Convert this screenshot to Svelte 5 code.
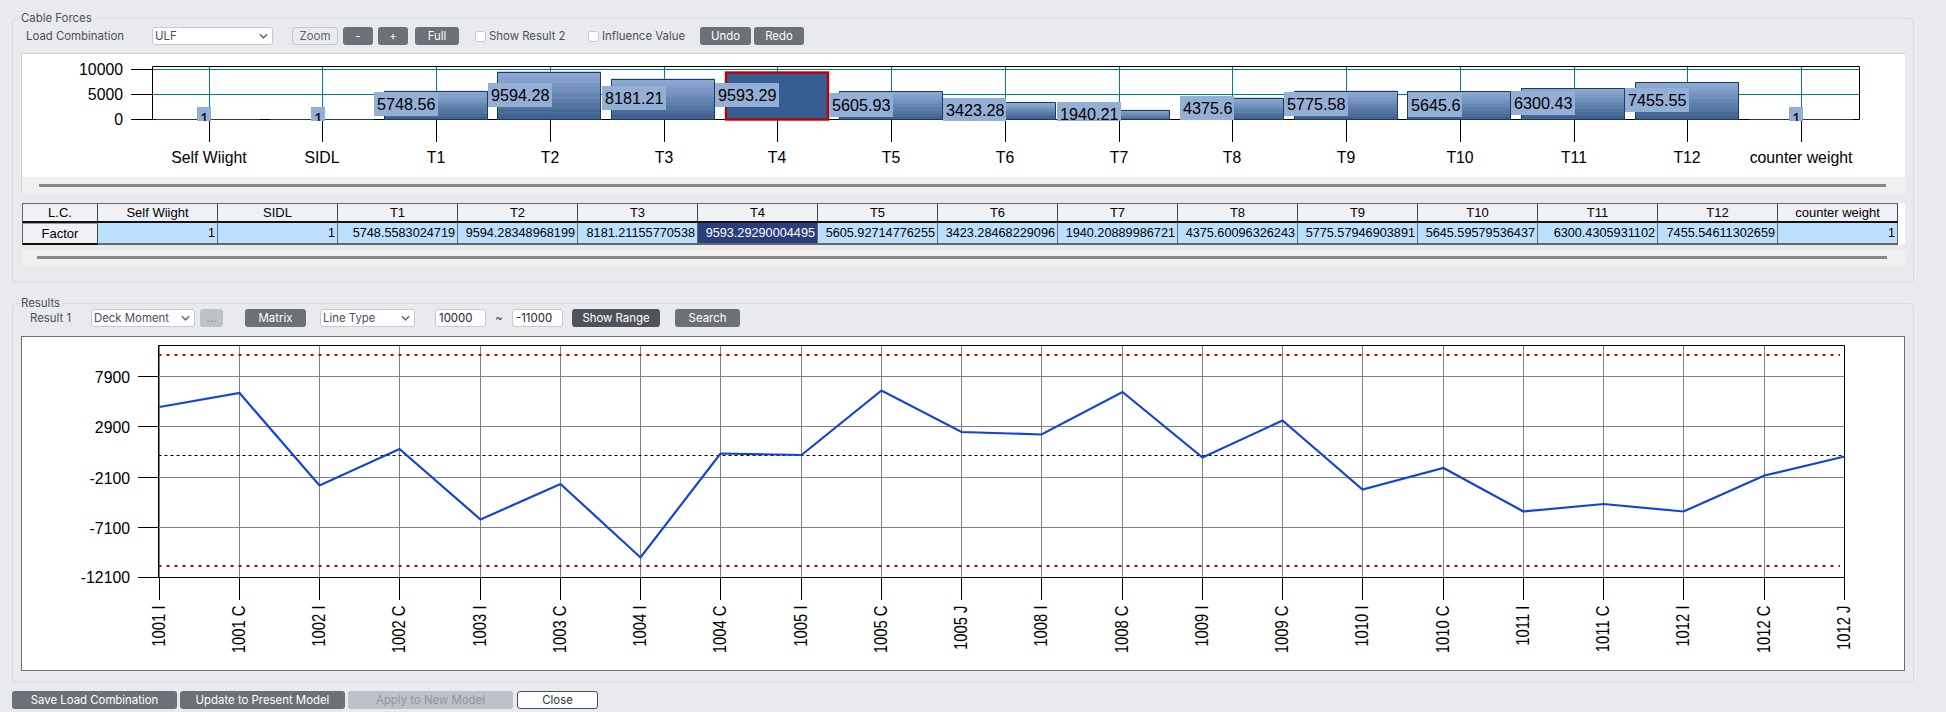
<script>
  const cats = ['Self Wiight','SIDL','T1','T2','T3','T4','T5','T6','T7','T8','T9','T10','T11','T12','counter weight'];
  const full = ['1','1','5748.5583024719','9594.28348968199','8181.21155770538','9593.29290004495','5605.92714776255','3423.28468229096','1940.20889986721','4375.60096326243','5775.57946903891','5645.59579536437','6300.4305931102','7455.54611302659','1'];
  const vals = [1,1,5748.56,9594.28,8181.21,9593.29,5605.93,3423.28,1940.21,4375.6,5775.58,5645.6,6300.43,7455.55,1];
  const labels = [
    ['1',197,211,107],['1',311,325,107],['5748.56',374,438,92],['9594.28',488,552,83],['8181.21',602,666,86],
    ['9593.29',715,779,83],['5605.93',829,893,93],['3423.28',943,1006,98],['1940.21',1057,1121,102],
    ['4375.6',1180,1234,96],['5775.58',1284,1348,92],['5645.6',1408,1462,93],['6300.43',1511,1575,91],
    ['7455.55',1625,1689,88],['1',1789,1803,107]
  ];
  const cx = (i) => Math.round(208.6 + 113.76 * i) + 0.5;
  const bands = Array.from({ length: 9 }, (_, i) => i);
  const bandColor = ['#8ba8d2','#84a1cb','#7b98c3','#7190bb','#6787b2','#5d7ea9','#5375a0','#496c97','#3f628e'];

  const pts = ['1001 I','1001 C','1002 I','1002 C','1003 I','1003 C','1004 I','1004 C','1005 I','1005 C','1005 J','1008 I','1008 C','1009 I','1009 C','1010 I','1010 C','1011 I','1011 C','1012 I','1012 C','1012 J'];
  const ys = [407,393,485.5,449,519.5,484,557.5,453.5,455,390.5,432,434.5,392,457.5,420.5,489.5,468,511.5,504,511.5,475.5,456.5];
  const px = (i) => Math.round(158.5 + 80.25 * i) + 0.5;
  const line = ys.map((y, i) => px(i) + ',' + y).join(' ');
  const yt = [['7900',376.5],['2900',426.5],['-2100',477.5],['-7100',527.5]];
</script>

<div class="page">
  <section class="group first">
    <span class="legend">Cable Forces</span>
    <div class="bar one">
      <span class="lbl wlc">Load Combination</span>
      <div class="sel wulf"><select><option>ULF</option></select><svg class="chev" viewBox="0 0 10 6"><path d="M1 1l4 4 4-4" /></svg></div>
      <button class="ghost wzoom">Zoom</button>
      <button class="btn wpm">-</button>
      <button class="btn wpm2">+</button>
      <button class="btn wfull">Full</button>
      <label class="chk c1"><input type="checkbox" />Show Result 2</label>
      <label class="chk c2"><input type="checkbox" />Influence Value</label>
      <button class="btn wundo">Undo</button>
      <button class="btn wredo">Redo</button>
    </div>

    <div class="panel">
      <svg class="top" viewBox="22 53 1883 123" width="1883" height="123">
        <defs><clipPath id="pc"><rect x="100" y="60" width="1770" height="61" /></clipPath></defs>
        <line x1="152.5" x2="1859.5" y1="69.5" y2="69.5" stroke="#008080" />
        <line x1="152.5" x2="1859.5" y1="94.5" y2="94.5" stroke="#008080" />
        {#each cats as c, i}
          <line x1={cx(i)} x2={cx(i)} y1="66" y2="119" stroke="#008080" />
          <line x1={cx(i)} x2={cx(i)} y1="119" y2="142" stroke="#000" />
          <text class="t16" x={cx(i) - 0.5} y="163" text-anchor="middle">{c}</text>
        {/each}
        <path d="M152.5 119.5V66.5H1859.5V119.5" fill="none" stroke="#000" />
        <line x1="131" x2="1859.5" y1="119.5" y2="119.5" stroke="#000" />
        <line x1="131" x2="152" y1="69.5" y2="69.5" stroke="#000" />
        <line x1="131" x2="152" y1="94.5" y2="94.5" stroke="#000" />
        <text class="t16" x="123" y="75" text-anchor="end">10000</text>
        <text class="t16" x="123" y="100" text-anchor="end">5000</text>
        <text class="t16" x="123" y="125" text-anchor="end">0</text>

        {#each vals as v, i}
          {@const l = Math.round(208.6 + 113.76 * i - 52.5)}
          {@const h = v * 0.005}
          {#if i === 5}
            <rect x={l + 1} y={119.5 - h + 1} width="102" height={h - 1} fill="#365d92" stroke="#c00000" stroke-width="2.4" />
          {:else if v > 1}
            {#each bands as b}
              <rect x={l} y={119.5 - h + (h * b) / 9} width="104" height={h / 9 + 0.5} fill={bandColor[b]} />
            {/each}
            <path d={`M${l + 0.5} 119.5V${Math.round(119.5 - h) + 0.5}H${l + 103.5}V119.5`} fill="none" stroke="#1d3a66" />
            <line x1={l} x2={l + 104} y1="119.5" y2="119.5" stroke="#1d3a66" />
          {:else}
            <line x1={l} x2={l + 104} y1="119.5" y2="119.5" stroke="#1d3a66" />
          {/if}
        {/each}
        {#each labels as b}
          <rect x={b[1]} y={b[3]} width={b[2] - b[1]} height={b[0] === '1' ? 14 : Math.min(24, 121 - b[3])} fill="#94afd6" />
        {/each}
        <g clip-path="url(#pc)">
          {#each labels as b}
            <text class="t16 big" x={b[1] + 3} y={b[0] === '1' ? 125 : b[3] + 18}>{b[0]}</text>
          {/each}
        </g>
      </svg>
      <div class="track"><span class="thumb"></span></div>
    </div>

    <div class="tablewrap">
      <table>
        <colgroup>
          <col class="c0" />
          {#each cats as c}<col class="cn" />{/each}
        </colgroup>
        <thead>
          <tr><th>L.C.</th>{#each cats as c}<th>{c}</th>{/each}</tr>
        </thead>
        <tbody>
          <tr>
            <th>Factor</th>
            {#each full as f, i}<td class:sel-cell={i === 5}>{f}</td>{/each}
          </tr>
        </tbody>
      </table>
      <div class="track low"><span class="thumb"></span></div>
    </div>
  </section>

  <section class="group second">
    <span class="legend">Results</span>
    <div class="bar two">
      <span class="lbl wr1">Result 1</span>
      <div class="sel wdeck"><select><option>Deck Moment</option></select><svg class="chev" viewBox="0 0 10 6"><path d="M1 1l4 4 4-4" /></svg></div>
      <button class="btn off wdots">...</button>
      <button class="btn wmatrix">Matrix</button>
      <div class="sel wline"><select><option>Line Type</option></select><svg class="chev" viewBox="0 0 10 6"><path d="M1 1l4 4 4-4" /></svg></div>
      <input class="num n1" value="10000" />
      <span class="tilde">~</span>
      <input class="num" value="-11000" />
      <button class="btn dark wrange">Show Range</button>
      <button class="btn wsearch">Search</button>
    </div>

    <div class="plot">
      <svg viewBox="22 337 1882 333" width="1882" height="333">
        {#each yt as t}
          <line x1="158" x2="1844" y1={t[1]} y2={t[1]} stroke="#808080" />
          <line x1="138" x2="158" y1={t[1]} y2={t[1]} stroke="#000" />
          <text class="t16" x="130" y={t[1] + 6} text-anchor="end">{t[0]}</text>
        {/each}
        <line x1="138" x2="158" y1="577.5" y2="577.5" stroke="#000" />
        <text class="t16" x="130" y="583" text-anchor="end">-12100</text>
        {#each pts as p, i}
          <line x1={px(i)} x2={px(i)} y1="345" y2="577" stroke="#808080" />
          <line x1={px(i)} x2={px(i)} y1="577" y2="600" stroke="#000" />
          <text class="t16" text-anchor="end" transform={`translate(${px(i) + 5.5} 605.5) rotate(-90) scale(0.94 1.15)`}>{p}</text>
        {/each}
        <line x1="158.5" x2="1840" y1="355" y2="355" stroke="#c80000" stroke-width="2" stroke-dasharray="3 5" />
        <line x1="158.5" x2="1840" y1="566" y2="566" stroke="#c80000" stroke-width="2" stroke-dasharray="3 5" />
        <line x1="158.5" x2="1844" y1="455.5" y2="455.5" stroke="#000" stroke-dasharray="3 3" />
        <path d="M158.5 577.5V345.5H1844.5V577.5Z" fill="none" stroke="#000" />
        <polyline points={line} fill="none" stroke="#0f45d8" stroke-width="2.2" />
      </svg>
    </div>
  </section>

  <div class="actions">
    <button class="btn wact">Save Load Combination</button>
    <button class="btn wact">Update to Present Model</button>
    <button class="btn off wact">Apply to New Model</button>
    <button class="close">Close</button>
  </div>
</div>

<style>
  :global(body) { margin: 0; background: #e9eaee; }
  .page {
    width: 1946px; height: 712px; overflow: hidden; box-sizing: border-box;
    padding: 18px 0 0 12px; background: #e9eaee;
    font: 11.4px Inter, "Liberation Sans", sans-serif; color: #495057;
  }
  .group {
    position: relative; box-sizing: border-box; width: 1902px;
    border: 1px solid #d8dade; border-radius: 4px; padding: 0 8px 0 9px;
  }
  .first { height: 265px; padding-top: 8px; }
  .second { height: 380px; margin-top: 20px; padding-top: 5px; }
  .legend {
    position: absolute; left: 7px; top: -8px; padding: 0 3px 0 1px; background: #e9eaee;
    line-height: 14px;
  }
  .bar { display: flex; align-items: center; height: 18px; }
  .lbl { display: block; }
  .wlc { width: 126px; margin-left: 4px; }
  .wr1 { width: 61px; margin-left: 8px; }
  .sel { position: relative; height: 18px; }
  select {
    width: 100%; height: 18px; box-sizing: border-box; appearance: none; margin: 0;
    background: #fff; border: 1px solid #c6c9ce; border-radius: 3px; padding: 0 2px;
    font: 11.4px Inter, sans-serif; color: #495057;
  }
  .chev { position: absolute; right: 5px; top: 6px; width: 9px; height: 6px; }
  .chev path { fill: none; stroke: #6c7177; stroke-width: 1.8; }
  .wulf { width: 121px; }
  .wdeck { width: 104px; }
  .wline { width: 95px; margin-left: 14px; }
  button {
    box-sizing: border-box; height: 18px; padding: 0; margin: 0; border: 0; border-radius: 3px;
    font: 11.4px Inter, sans-serif;
  }
  .btn { background: #6c7177; color: #fff; }
  .btn.dark { background: #4f545c; }
  .btn.off { background: #bcc2c8; color: #8e979f; }
  .ghost { background: #e9eaee; border: 1px solid #c6c9ce; color: #5d6368; }
  .wzoom { width: 46px; margin-left: 19px; }
  .wpm { width: 30px; margin-left: 5px; }
  .wpm2 { width: 30px; margin-left: 5px; }
  .wfull { width: 44px; margin-left: 7px; }
  .chk { display: flex; align-items: center; }
  .chk input {
    appearance: none; box-sizing: border-box; width: 11px; height: 11px; margin: 0 3px 0 0;
    background: #fff; border: 1px solid #c6c9ce; border-radius: 3px;
  }
  .c1 { margin-left: 16px; width: 113px; }
  .c2 { width: 112px; }
  .wundo { width: 51px; }
  .wredo { width: 50px; margin-left: 3px; }
  .wdots { width: 23px; margin-left: 5px; background: #adb3ba; color: #fff; }
  .wmatrix { width: 61px; margin-left: 22px; }
  .num {
    box-sizing: border-box; width: 51px; height: 18px; margin: 0; padding: 0 3px;
    border: 1px solid #c6c9ce; border-radius: 3px; background: #fff;
    font: 11.4px Inter, sans-serif; color: #212529;
  }
  .n1 { margin-left: 20px; }
  .tilde { width: 26px; text-align: center; }
  .wrange { width: 88px; margin-left: 9px; }
  .wsearch { width: 65px; margin-left: 15px; }

  .panel {
    width: 1883px; height: 140px; margin-top: 8px; box-sizing: border-box;
    border-top: 1px solid #cfd1d6; border-bottom: 1px solid #cfd1d6; background: #fff;
    box-shadow: -1px 0 0 #cfd1d6;
  }
  .panel .top { display: block; margin-top: -1px; }
  svg { display: block; }
  svg text, .t16 { font: 15.8px "Liberation Sans", Arial, sans-serif; fill: #000; }
  svg text.big { font-size: 16.2px; }
  .track {
    display: flex; align-items: center; height: 17px; padding: 1px 19px 0 17px;
    background: #f0f0f0; border-top: 1px solid #fff; box-sizing: border-box;
  }
  .thumb { flex: 1; height: 3px; background: #888; }
  .tablewrap { width: 1883px; margin-top: 10px; }
  table {
    table-layout: fixed; border-collapse: separate; border-spacing: 0; width: 1876px; height: 42px;
    font: 13px "Liberation Sans", Arial, sans-serif; color: #000;
    background: #fff; box-shadow: 7px 0 0 #fff;
  }
  .c0 { width: 76px; }
  .cn { width: 120px; }
  th, td { box-sizing: border-box; padding: 0; line-height: 15px; }
  th {
    height: 21px; background: #f0f1f5; font-weight: 400;
    border-right: 1px solid #444; border-top: 1px solid #666; border-bottom: 2px solid #111;
  }
  thead th { height: 20px; }
  th:first-child { border-left: 1px solid #666; }
  tbody th { height: 22px; border-top: 1px solid #999; }
  td {
    height: 22px; padding: 0 2px 0 0; text-align: right; background: #bbdfff; font-size: 12.7px;
    border-right: 1px solid #666; border-bottom: 2px solid #666; white-space: nowrap; overflow: hidden;
  }
  td.sel-cell { background: #2a3d7c; color: #fff; }
  .low { margin-top: 4px; height: 16px; padding: 0 18px 0 15px; border-top: 0; }

  .plot {
    width: 1884px; height: 335px; margin-top: 9px; box-sizing: border-box;
    border: 1px solid #6f6f6f; background: #fff; margin-left: -1px;
  }
  .actions { display: flex; gap: 3px; margin-top: 8px; }
  .wact { width: 165px; }
  .close {
    box-sizing: border-box; width: 81px; margin-left: 1px; background: #fff; color: #333;
    border: 1px solid #495057;
  }
</style>
